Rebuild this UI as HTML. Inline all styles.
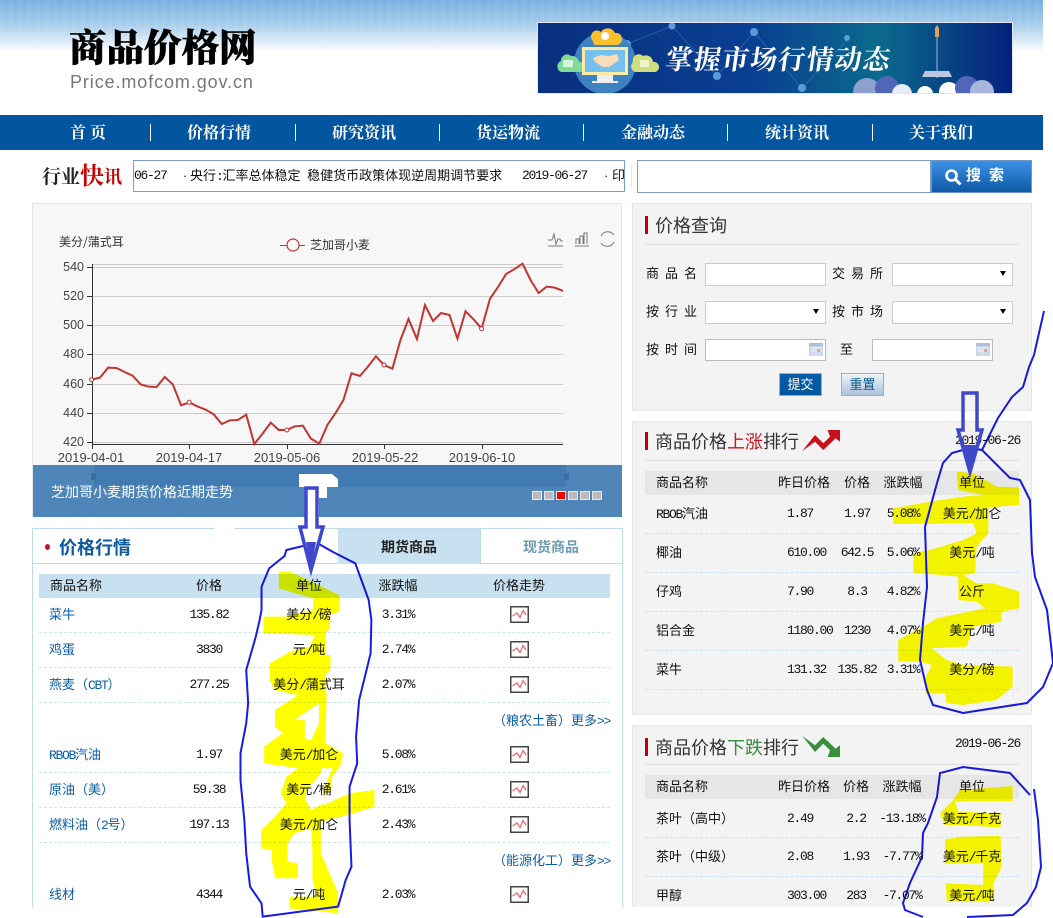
<!DOCTYPE html>
<html lang="zh-CN"><head><meta charset="utf-8"><title>商品价格网</title>
<style>
html,body{margin:0;padding:0;background:#fff}
#w{position:relative;width:1053px;height:918px;overflow:hidden;background:#fff;isolation:isolate;font-family:"Liberation Sans","WenQuanYi Zen Hei","Noto Sans CJK SC",sans-serif;font-size:13px;color:#111}
.a{position:absolute}
.t{position:absolute;white-space:nowrap;line-height:16px;height:16px;margin-top:1px}
.c{transform:translateX(-50%)}
.n{font-family:"Liberation Mono",monospace;letter-spacing:-1.3px;font-size:13px}
.l{color:#0b5ea8}
.d{position:absolute;height:0;border-top:1px dashed #cde4f2}
.s{font-family:"Noto Sans CJK SC",sans-serif}
.h{font-family:"Noto Serif CJK SC",serif;font-weight:700}
.nv{position:absolute;top:123px;line-height:18px;font-size:16px;color:#fff;font-family:"Noto Serif CJK SC",serif;font-weight:700;transform:translateX(-50%);white-space:nowrap}
.sp{position:absolute;top:124px;width:1px;height:17px;background:#fff}
.p{position:absolute;background:#f3f3f3;border:1px solid #e6e6e6;box-sizing:border-box}
.rb{position:absolute;left:645px;width:3px;height:18px;background:#c00010}
.ti{position:absolute;left:655px;font-size:18px;line-height:24px;color:#333;font-family:"Noto Sans CJK SC",sans-serif;white-space:nowrap}
.ln{position:absolute;left:645px;width:374px;height:1px;background:#dcdcdc}
.hb{position:absolute;left:645px;width:374px;height:24px;background:#e6e6e6}
.in{position:absolute;width:121px;height:23px;background:#fff;border:1px solid #ccc;box-sizing:border-box}
.lb{position:absolute;white-space:nowrap;line-height:16px;letter-spacing:6px;margin-top:1px}
.tr{position:absolute;width:0;height:0;border-left:3px solid transparent;border-right:3px solid transparent;border-top:5px solid #000}
.cb{position:absolute;width:8px;height:7px;background:#bbb;border:1px solid #e8e8e8;box-sizing:content-box}
</style></head><body><div id="w">

<div class="a" style="left:0;top:0;width:1043px;height:52px;background:repeating-linear-gradient(90deg,rgba(255,255,255,.05) 0 4px,rgba(255,255,255,0) 4px 9px),linear-gradient(#78b0e0,#a5cbea 45%,#fff)"></div>
<div class="t h" style="left:69px;top:22px;height:44px;line-height:44px;font-size:37.5px;font-weight:900;color:#000;-webkit-text-stroke:.6px #000">商品价格网</div>
<div class="t" style="left:70px;top:71px;height:20px;line-height:20px;font-size:18px;letter-spacing:.9px;color:#777;font-family:'Liberation Sans',sans-serif">Price.mofcom.gov.cn</div>

<svg class="a" style="left:537px;top:22px" width="476" height="72" viewBox="0 0 476 72">
<defs><linearGradient id="bg" x1="0" x2="1" y1="0" y2="0"><stop offset="0" stop-color="#0a2f7e"/><stop offset=".45" stop-color="#0a3f92"/><stop offset=".72" stop-color="#0b6a8c"/><stop offset="1" stop-color="#04207c"/></linearGradient></defs>
<rect width="476" height="72" fill="url(#bg)"/>
<g stroke="#3d7dbb" fill="none" stroke-width=".7" opacity=".8"><path d="M90 22L135 4L180 54L217 10L265 66L310 18"/></g>
<g fill="#5a9bd8"><circle cx="135" cy="4" r="3.5"/><circle cx="180" cy="54" r="4"/><circle cx="217" cy="10" r="4"/><circle cx="265" cy="66" r="4"/><circle cx="310" cy="16" r="3"/><circle cx="90" cy="22" r="4"/></g>
<circle cx="68" cy="41" r="31" fill="#3f82c2"/>
<path d="M56 19a6 6 0 0 1 8-9a8 8 0 0 1 14 1a6 6 0 0 1 2 12H58a5 5 0 0 1-2-4z" fill="#fbc02d"/>
<circle cx="68" cy="14" r="4" fill="#fff"/>
<path d="M24 39a6 6 0 0 1 10-5a7 7 0 0 1 8 6a5 5 0 0 1 1 10H24a6 6 0 0 1 0-11z" fill="#7fdc96"/>
<rect x="26" y="38" width="10" height="7" fill="#d6f5dc"/>
<path d="M96 40a6 6 0 0 1 10-6a7 7 0 0 1 10 6a5 5 0 0 1 2 10H98a6 6 0 0 1-2-10z" fill="#cfdc80"/>
<rect x="103" y="38" width="9" height="7" fill="#eef3c8"/>
<rect x="45" y="25" width="46" height="28" fill="#fbeaa6"/><rect x="48" y="28" width="40" height="22" fill="#74c0ee"/>
<path d="M60 53h16v6h5v2H55v-2h5z" fill="#eee"/>
<path d="M56 36l8-3l8 1l8-2l2 6l-10 7h-6l-8-5z" fill="#fbdcb8"/>
<text x="128" y="47" font-family="Noto Serif CJK SC,serif" font-weight="700" font-size="27" letter-spacing="1.2" fill="#fff" transform="skewX(-8) translate(6 0)">掌握市场行情动态</text>
<path d="M398 6l2-3l2 3v9h-4z" fill="#e8a060"/><path d="M400 15v41" stroke="#9fb5d6"/><path d="M388 49h24l3 6h-30z" fill="#b9c7e0"/>
<circle cx="330" cy="70" r="14" fill="#8f9fd0"/><circle cx="350" cy="66" r="12" fill="#5066b8"/><circle cx="365" cy="72" r="10" fill="#e8ecf8"/><circle cx="388" cy="72" r="8" fill="#fff"/><circle cx="412" cy="70" r="10" fill="#fff"/><circle cx="430" cy="66" r="12" fill="#5066b8"/><circle cx="445" cy="70" r="12" fill="#aab6dc"/>
<rect x=".5" y=".5" width="475" height="71" fill="none" stroke="#dfe7f2"/>
</svg>

<div class="a" style="left:0;top:115px;width:1043px;height:35px;background:#02569f"></div>
<div class="nv" style="left:88px">首 页</div><div class="sp" style="left:150px"></div>
<div class="nv" style="left:219px">价格行情</div><div class="sp" style="left:295px"></div>
<div class="nv" style="left:364px">研究资讯</div><div class="sp" style="left:439px"></div>
<div class="nv" style="left:508px">货运物流</div><div class="sp" style="left:583px"></div>
<div class="nv" style="left:653px">金融动态</div><div class="sp" style="left:727px"></div>
<div class="nv" style="left:797px">统计资讯</div><div class="sp" style="left:872px"></div>
<div class="nv" style="left:941px">关于我们</div>

<div class="t h" style="left:42px;top:164px;height:22px;line-height:22px;font-size:19px;color:#222">行业</div>
<div class="t h" style="left:80px;top:159px;height:28px;line-height:28px;font-size:24px;color:#c00">快</div>
<div class="t h" style="left:104px;top:164px;height:22px;line-height:22px;font-size:18px;color:#c00">讯</div>

<div class="a" style="left:133px;top:160px;width:492px;height:32px;border:1px solid #7a9cc6;box-sizing:border-box;overflow:hidden;background:#fff">
<span class="t n" style="left:0;top:6px">06-27</span>
<span class="t" style="left:49px;top:6px">·</span>
<span class="t" style="left:56px;top:6px">央行<span class="n">:</span>汇率总体稳定<span class="n"> </span>稳健货币政策体现逆周期调节要求</span>
<span class="t n" style="left:388px;top:6px">2019-06-27</span>
<span class="t" style="left:470px;top:6px">·</span>
<span class="t" style="left:478px;top:6px">印</span>
</div>
<div class="a" style="left:631px;top:165px;width:1px;height:22px;background:#e6e6e6"></div>
<div class="a" style="left:637px;top:160px;width:294px;height:33px;border:1px solid #7a9cc6;box-sizing:border-box;background:#fff"></div>
<div class="a" style="left:931px;top:160px;width:101px;height:33px;border:1px solid #6f97c6;box-sizing:border-box;background:linear-gradient(#3c91e6,#0e5aa6)"></div>
<svg class="a" style="left:944px;top:168px" width="20" height="20" viewBox="0 0 20 20"><circle cx="7.5" cy="7.5" r="5" fill="none" stroke="#fff" stroke-width="2.6"/><path d="M11 11l5.5 5.5" stroke="#fff" stroke-width="3"/></svg>
<div class="t" style="left:966px;top:166px;height:18px;line-height:18px;font-size:15px;font-weight:700;color:#fff;letter-spacing:8px">搜索</div>

<div class="a" style="left:32px;top:203px;width:590px;height:314px;background:#f7f7f7;border:1px solid #e6e6e6;box-sizing:border-box"></div>
<svg class="a" style="left:0;top:0" width="640" height="470" viewBox="0 0 640 470">
<g stroke="#ccc" stroke-width="1"><path d="M93 264.500H563M93 267.500H563M93 296.500H563M93 325.500H563M93 354.500H563M93 384.500H563M93 413.500H563M93 442.500H563"/></g>
<g stroke="#333" stroke-width="1" fill="none"><path d="M92.500 264V449M92 444.500H563M87 267.500h5M87 296.500h5M87 325.500h5M87 354.500h5M87 384.500h5M87 413.500h5M87 442.500h5M189.500 444v5M287.500 444v5M384.500 444v5M482.500 444v5"/></g>
<g transform="translate(30,200) scale(.3827,.3333)"><polyline fill="none" stroke="#c23531" stroke-width="2" vector-effect="non-scaling-stroke" points="161,539 183,533 204,503 226,504 247,516 268,527 289,553 310,560 331,561 352,531 373,553 395,616 416,607 437,619 459,629 480,643 501,672 522,661 543,660 565,644 586,732 607,702 629,668 650,690 671,690 692,679 713,677 734,716 756,731 777,675 798,640 819,600 840,520 862,528 883,500 904,469 925,495 947,506 968,420 989,357 1011,417 1032,315 1053,363 1074,339 1096,345 1117,416 1138,334 1159,358 1180,386 1202,296 1223,261 1244,222 1265,208 1287,191 1308,240 1329,279 1350,260 1371,263 1393,273"/></g>
<g fill="#fff" stroke="#c23531"><circle cx="91.600" cy="379.700" r="2"/><circle cx="189.200" cy="402.300" r="2"/><circle cx="286.800" cy="430" r="2"/><circle cx="384" cy="365" r="2"/><circle cx="481.600" cy="328.700" r="2"/></g>
<path d="M280 245.500h25" stroke="#c23531"/><circle cx="293" cy="245" r="6" fill="#f7f7f7" stroke="#c23531" stroke-width="1.200"/>
<g fill="none" stroke="#777" stroke-width="1"><path d="M548 240h4l2-6l2 10l2-5h2l1 2h2M548 246h15"/><path d="M576 244v-5h3v5M580 244v-8h3v8M584 244v-11h3v11M575 246h14"/><path d="M601 236a7.500 7.500 0 0 1 13-1M614 242a7.500 7.500 0 0 1-13 1"/></g>
<g font-family="Noto Sans CJK SC,sans-serif" font-size="12" fill="#333"><text x="59" y="246">美分/蒲式耳</text><text x="310" y="249" font-size="12">芝加哥小麦</text></g>
<g font-family="Liberation Sans,sans-serif" font-size="12.500" fill="#444" text-anchor="end"><text x="84" y="271">540</text><text x="84" y="300">520</text><text x="84" y="329">500</text><text x="84" y="358">480</text><text x="84" y="388">460</text><text x="84" y="417">440</text><text x="84" y="446">420</text></g>
<g font-family="Liberation Sans,sans-serif" font-size="13" fill="#444" text-anchor="middle"><text x="91" y="462">2019-04-01</text><text x="189" y="462">2019-04-17</text><text x="287" y="462">2019-05-06</text><text x="385" y="462">2019-05-22</text><text x="482" y="462">2019-06-10</text></g>
</svg>
<div class="a" style="left:33px;top:465px;width:589px;height:52px;background:#4f86ba"></div>
<div class="a" style="left:94px;top:465px;width:472px;height:22px;background:#417bb1"></div>
<div class="a" style="left:91px;top:473px;width:5px;height:7px;background:#3a72a8"></div>
<div class="a" style="left:564px;top:473px;width:5px;height:7px;background:#3a72a8"></div>
<div class="t s" style="left:51px;top:481px;height:20px;line-height:20px;font-size:14px;color:#fff">芝加哥小麦期货价格近期走势</div>
<div class="cb" style="left:532px;top:491px"></div><div class="cb" style="left:544px;top:491px"></div><div class="cb" style="left:556px;top:491px;background:#f00"></div><div class="cb" style="left:568px;top:491px"></div><div class="cb" style="left:580px;top:491px"></div><div class="cb" style="left:592px;top:491px"></div>

<div class="a" style="left:32px;top:528px;width:591px;height:379px;border:1px solid #bcdcee;border-bottom:0;box-sizing:border-box;background:#fff"></div>
<div class="a" style="left:214px;top:527px;width:21px;height:3px;background:#fff"></div>
<div class="a" style="left:33px;top:563px;width:589px;height:1px;background:#bcdcee"></div>
<div class="a" style="left:338px;top:529px;width:142px;height:35px;background:#c8e1f0"></div>
<div class="a" style="left:480px;top:529px;width:1px;height:35px;background:#bcdcee"></div>
<div class="a" style="left:45px;top:544px;width:5px;height:6px;border-radius:50%;background:#c8102e"></div>
<div class="t s" style="left:59px;top:533px;height:26px;line-height:26px;font-size:18px;font-weight:700;color:#0c5aa0">价格行情</div>
<div class="t c s" style="left:409px;top:536px;height:20px;line-height:20px;font-size:14px;font-weight:700;color:#222">期货商品</div>
<div class="t c s" style="left:551px;top:536px;height:20px;line-height:20px;font-size:14px;font-weight:700;color:#6a9bb5">现货商品</div>
<div class="a" style="left:39px;top:574px;width:571px;height:24px;background:#c8e1f0"></div>
<div class="t" style="left:50px;top:577px">商品名称</div><div class="t c" style="left:209px;top:577px">价格</div><div class="t c" style="left:309px;top:577px">单位</div><div class="t c" style="left:398px;top:577px">涨跌幅</div><div class="t c" style="left:519px;top:577px">价格走势</div>

<svg width="0" height="0" style="position:absolute"><defs><symbol id="ic" viewBox="0 0 19 17"><rect x=".75" y=".75" width="17.500" height="15.500" fill="#fff" stroke="#444" stroke-width="1.500"/><path d="M2.500 10L5.500 8L7 7L10 11.500L13 4.500L16 9" fill="none" stroke="#f2606a" stroke-width="1.200"/></symbol></defs></svg>

<div class="t l" style="left:49px;top:606px">菜牛</div><div class="t c n" style="left:209px;top:606px">135.82</div><div class="t c" style="left:309px;top:606px">美分<span class="n">/</span>磅</div><div class="t c n" style="left:398px;top:606px">3.31%</div><svg class="a" style="left:510px;top:606px" width="19" height="17"><use href="#ic"/></svg>
<div class="d" style="left:39px;top:632px;width:571px"></div>
<div class="t l" style="left:49px;top:641px">鸡蛋</div><div class="t c n" style="left:209px;top:641px">3830</div><div class="t c" style="left:309px;top:641px">元<span class="n">/</span>吨</div><div class="t c n" style="left:398px;top:641px">2.74%</div><svg class="a" style="left:510px;top:641px" width="19" height="17"><use href="#ic"/></svg>
<div class="d" style="left:39px;top:667px;width:571px"></div>
<div class="t l" style="left:49px;top:676px">燕麦（<span class="n">CBT</span>）</div><div class="t c n" style="left:209px;top:676px">277.25</div><div class="t c" style="left:309px;top:676px">美分<span class="n">/</span>蒲式耳</div><div class="t c n" style="left:398px;top:676px">2.07%</div><svg class="a" style="left:510px;top:676px" width="19" height="17"><use href="#ic"/></svg>
<div class="d" style="left:39px;top:702px;width:571px"></div>
<div class="t l" style="right:443px;top:712px">（粮农土畜）更多<span class="n">&gt;&gt;</span></div>
<div class="t l" style="left:49px;top:746px"><span class="n">RBOB</span>汽油</div><div class="t c n" style="left:209px;top:746px">1.97</div><div class="t c" style="left:309px;top:746px">美元<span class="n">/</span>加仑</div><div class="t c n" style="left:398px;top:746px">5.08%</div><svg class="a" style="left:510px;top:746px" width="19" height="17"><use href="#ic"/></svg>
<div class="d" style="left:39px;top:772px;width:571px"></div>
<div class="t l" style="left:49px;top:781px">原油（美）</div><div class="t c n" style="left:209px;top:781px">59.38</div><div class="t c" style="left:309px;top:781px">美元<span class="n">/</span>桶</div><div class="t c n" style="left:398px;top:781px">2.61%</div><svg class="a" style="left:510px;top:781px" width="19" height="17"><use href="#ic"/></svg>
<div class="d" style="left:39px;top:807px;width:571px"></div>
<div class="t l" style="left:49px;top:816px">燃料油（<span class="n">2</span>号）</div><div class="t c n" style="left:209px;top:816px">197.13</div><div class="t c" style="left:309px;top:816px">美元<span class="n">/</span>加仑</div><div class="t c n" style="left:398px;top:816px">2.43%</div><svg class="a" style="left:510px;top:816px" width="19" height="17"><use href="#ic"/></svg>
<div class="d" style="left:39px;top:842px;width:571px"></div>
<div class="t l" style="right:443px;top:852px">（能源化工）更多<span class="n">&gt;&gt;</span></div>
<div class="t l" style="left:49px;top:886px">线材</div><div class="t c n" style="left:209px;top:886px">4344</div><div class="t c" style="left:309px;top:886px">元<span class="n">/</span>吨</div><div class="t c n" style="left:398px;top:886px">2.03%</div><svg class="a" style="left:510px;top:886px" width="19" height="17"><use href="#ic"/></svg>

<div class="p" style="left:632px;top:203px;width:400px;height:208px"></div>
<div class="rb" style="top:216px"></div><div class="ti" style="top:213px">价格查询</div><div class="ln" style="top:244px"></div>
<div class="lb" style="left:646px;top:265px">商品名</div><div class="in" style="left:705px;top:263px"></div>
<div class="lb" style="left:832px;top:265px">交易所</div><div class="in" style="left:892px;top:263px"></div><div class="tr" style="left:1000px;top:271px"></div>
<div class="lb" style="left:646px;top:303px">按行业</div><div class="in" style="left:705px;top:301px"></div><div class="tr" style="left:813px;top:309px"></div>
<div class="lb" style="left:832px;top:303px">按市场</div><div class="in" style="left:892px;top:301px"></div><div class="tr" style="left:1000px;top:309px"></div>
<div class="lb" style="left:646px;top:341px">按时间</div><div class="in" style="left:705px;top:339px;height:22px;border-color:#bbb"></div>
<div class="t" style="left:840px;top:341px">至</div><div class="in" style="left:872px;top:339px;height:22px;border-color:#bbb"></div>
<svg class="a" style="left:809px;top:343px" width="14" height="13"><rect width="14" height="13" fill="#c9d6e8"/><rect y="0" width="14" height="3" fill="#aebfd8"/><path d="M1 5h12M1 8h12M4 4v8M7 4v8M10 4v8" stroke="#e8eef6"/><rect x="8" y="6" width="3" height="3" fill="#f0a090"/></svg>
<svg class="a" style="left:976px;top:343px" width="14" height="13"><rect width="14" height="13" fill="#c9d6e8"/><rect y="0" width="14" height="3" fill="#aebfd8"/><path d="M1 5h12M1 8h12M4 4v8M7 4v8M10 4v8" stroke="#e8eef6"/><rect x="8" y="6" width="3" height="3" fill="#f0a090"/></svg>
<div class="a" style="left:779px;top:373px;width:43px;height:23px;background:linear-gradient(#0a5ca6,#02569f);border:1px solid #8fb0d0;box-sizing:border-box;color:#fff;text-align:center;line-height:21px">提交</div>
<div class="a" style="left:841px;top:373px;width:43px;height:23px;background:linear-gradient(#eef3f9,#a9c1dc);border:1px solid #8fb0d0;box-sizing:border-box;color:#0b5a8e;text-align:center;line-height:21px">重置</div>

<div class="p" style="left:632px;top:421px;width:400px;height:294px"></div>
<div class="rb" style="top:432px"></div><div class="ti" style="top:429px">商品价格<span style="color:#c8161d">上涨</span>排行</div><div class="ln" style="top:460px"></div>
<svg class="a" style="left:802px;top:430px" width="38" height="22" viewBox="0 0 38 22"><path d="M.3 21L13 5L21.300 13.300L28 6.700L25.700 0L38 0L38 11.700L33.700 8.300L21.300 20L13 11.700Z" fill="#c8101c"/></svg>
<div class="t n" style="left:955px;top:432px">2019-06-26</div>
<div class="hb" style="top:471px"></div>
<div class="t" style="left:656px;top:474px">商品名称</div><div class="t c" style="left:804px;top:474px">昨日价格</div><div class="t c" style="left:857px;top:474px">价格</div><div class="t c" style="left:903px;top:474px">涨跌幅</div><div class="t c" style="left:972px;top:474px">单位</div>
<div class="t" style="left:656px;top:505px"><span class="n">RBOB</span>汽油</div><div class="t n" style="left:787px;top:505px">1.87</div><div class="t c n" style="left:857px;top:505px">1.97</div><div class="t c n" style="left:903px;top:505px">5.08%</div><div class="t c" style="left:972px;top:505px">美元<span class="n">/</span>加仑</div>
<div class="d" style="left:645px;top:533px;width:374px"></div>
<div class="t" style="left:656px;top:544px">椰油</div><div class="t n" style="left:787px;top:544px">610.00</div><div class="t c n" style="left:857px;top:544px">642.5</div><div class="t c n" style="left:903px;top:544px">5.06%</div><div class="t c" style="left:972px;top:544px">美元<span class="n">/</span>吨</div>
<div class="d" style="left:645px;top:572px;width:374px"></div>
<div class="t" style="left:656px;top:583px">仔鸡</div><div class="t n" style="left:787px;top:583px">7.90</div><div class="t c n" style="left:857px;top:583px">8.3</div><div class="t c n" style="left:903px;top:583px">4.82%</div><div class="t c" style="left:972px;top:583px">公斤</div>
<div class="d" style="left:645px;top:611px;width:374px"></div>
<div class="t" style="left:656px;top:622px">铝合金</div><div class="t n" style="left:787px;top:622px">1180.00</div><div class="t c n" style="left:857px;top:622px">1230</div><div class="t c n" style="left:903px;top:622px">4.07%</div><div class="t c" style="left:972px;top:622px">美元<span class="n">/</span>吨</div>
<div class="d" style="left:645px;top:650px;width:374px"></div>
<div class="t" style="left:656px;top:661px">菜牛</div><div class="t n" style="left:787px;top:661px">131.32</div><div class="t c n" style="left:857px;top:661px">135.82</div><div class="t c n" style="left:903px;top:661px">3.31%</div><div class="t c" style="left:972px;top:661px">美分<span class="n">/</span>磅</div>
<div class="d" style="left:645px;top:689px;width:374px"></div>

<div class="a" style="left:632px;top:725px;width:400px;height:182px;background:#f3f3f3;border:1px solid #e6e6e6;border-bottom:0;box-sizing:border-box"></div>
<div class="rb" style="top:738px"></div><div class="ti" style="top:735px">商品价格<span style="color:#3a8a3f">下跌</span>排行</div><div class="ln" style="top:764px"></div>
<svg class="a" style="left:802px;top:735px" width="38" height="22" viewBox="0 0 38 22"><path transform="translate(0 22) scale(1 -1)" d="M.3 21L13 5L21.300 13.300L28 6.700L25.700 0L38 0L38 11.700L33.700 8.300L21.300 20L13 11.700Z" fill="#3a8f3f"/></svg>
<div class="t n" style="left:955px;top:735px">2019-06-26</div>
<div class="hb" style="top:775px"></div>
<div class="t" style="left:656px;top:778px">商品名称</div><div class="t c" style="left:804px;top:778px">昨日价格</div><div class="t c" style="left:856px;top:778px">价格</div><div class="t c" style="left:902px;top:778px">涨跌幅</div><div class="t c" style="left:972px;top:778px">单位</div>
<div class="t" style="left:656px;top:810px">茶叶（高中）</div><div class="t n" style="left:787px;top:810px">2.49</div><div class="t c n" style="left:856px;top:810px">2.2</div><div class="t c n" style="left:902px;top:810px">-13.18%</div><div class="t c" style="left:972px;top:810px">美元<span class="n">/</span>千克</div>
<div class="d" style="left:645px;top:837px;width:374px"></div>
<div class="t" style="left:656px;top:848px">茶叶（中级）</div><div class="t n" style="left:787px;top:848px">2.08</div><div class="t c n" style="left:856px;top:848px">1.93</div><div class="t c n" style="left:902px;top:848px">-7.77%</div><div class="t c" style="left:972px;top:848px">美元<span class="n">/</span>千克</div>
<div class="d" style="left:645px;top:876px;width:374px"></div>
<div class="t" style="left:656px;top:887px">甲醇</div><div class="t n" style="left:787px;top:887px">303.00</div><div class="t c n" style="left:856px;top:887px">283</div><div class="t c n" style="left:902px;top:887px">-7.07%</div><div class="t c" style="left:972px;top:887px">美元<span class="n">/</span>吨</div>
<div class="a" style="left:0;top:907px;width:1053px;height:11px;background:#fff"></div>

<svg class="a" style="left:0;top:0;mix-blend-mode:multiply" width="1053" height="918" viewBox="0 0 1053 918">
<g transform="translate(30,520) scale(.3827,.3333)">
<path fill="#ff0" fill-rule="evenodd" d="M650 155L680 155L808 225L808 275L782 285L782 325L772 340L772 405L785 405L785 450L770 465L775 530L772 670L818 700L812 735L790 770L785 810L768 830L768 855L835 820L900 810L900 860L830 885L760 905L760 1000L775 1040L805 1120L805 1180L678 1165L678 1130L750 1130L738 1080L738 1000L735 925L690 940L672 975L672 1025L700 1030L700 1075L640 1075L632 1020L632 990L604 985L604 930L640 890L670 850L655 820L670 770L700 745L612 730L612 680L660 640L640 620L640 570L700 525L640 510L626 480L626 430L680 395L730 380L745 345L610 340L610 290L670 290L740 270L740 235L650 205Z M755 550L690 600L718 600L718 655L735 660L755 610Z M762 745L790 745L770 800L768 850L735 870L720 840L720 815L760 760Z"/>
<path fill="none" stroke="#1a1ae6" stroke-width="2" vector-effect="non-scaling-stroke" d="M735 72L670 90L665 108L625 145L605 200L605 270L600 300L590 350L565 450L570 550L565 610L550 700L550 780L560 900L565 1000L575 1100L605 1150L608 1190L805 1160L825 1080L840 1040L835 900L835 800L855 730L852 650L860 540L890 400L892 300L885 240L850 130L790 95L755 72"/>
</g>
<g transform="translate(630,420) scale(.3333)">
<path fill="#ff0" d="M980 155L1030 160L1100 200L1168 202L1168 255L1075 262L1075 340L1040 380L1035 460L1000 465L1040 490L1090 490L1168 515L1168 565L1115 575L1115 605L1030 620L1010 680L905 685L950 720L1000 735L1148 740L1148 800L1100 840L1000 855L950 850L945 820L888 820L888 770L905 735L870 725L805 725L805 660L880 620L920 595L1040 570L1065 565L1040 545L985 540L985 470L850 458L850 400L900 390L1000 360L1040 340L1030 310L790 312L790 265L900 245L1000 230L1060 225L985 210Z"/>
</g>
<g transform="translate(630,720) scale(.3333)" fill="#ff0">
<path d="M990 210L1148 198L1148 243L975 245L985 275L1112 280L1112 322L1040 318L945 315L930 280L970 240Z"/>
<path d="M945 358L1000 350L1112 348L1115 440L1090 492L1090 545L950 545L948 490L1060 495L1060 430L945 430Z"/>
</g>
<g fill="none" stroke="#1a1ae6" stroke-width="2">
<path d="M1044 311L1039 333L1034 355L1029 367L1023 387L1012 397L998 418L982 450L1010 478L1020 480L1030 500L1032 553L1035 577L1047 610L1053 663L1043 687L1027 703L963 713L933 705L927 690L920 660L923 623L927 587L925 527L937 483L943 463L952 453L970 448L982 450"/>
<path d="M1034 789L1038 820L1041 867L1036 887L1027 903L1013 915L967 917"/>
<path d="M923 917L905 910L903 903L910 883L922 857L923 833L928 823L937 797L940 773L952 770L963 767L1010 773L1030 795"/>
</g>
</svg>

<svg class="a" style="left:0;top:0" width="1053" height="918" viewBox="0 0 1053 918">
<path d="M299 474L332 474L338 479L338 487L327 487L327 498L319 498L319 517L305 517L305 487L299 487Z" fill="#fff"/>
<path d="M306 488L317 488L317 527L323 527L311 570L300 527L306 527Z" fill="#fff" stroke="#3f48cc" stroke-width="3.500"/>
<path d="M306 542L316 542L311 568Z" fill="#3f48cc"/>
<path d="M963 393L977 393L977 430L982 430L970 472L958 430L963 430Z" fill="none" stroke="#3f48cc" stroke-width="3.500"/>
<path d="M964 445L976 445L970 470Z" fill="#3f48cc"/>
</svg>
</div></body></html>
